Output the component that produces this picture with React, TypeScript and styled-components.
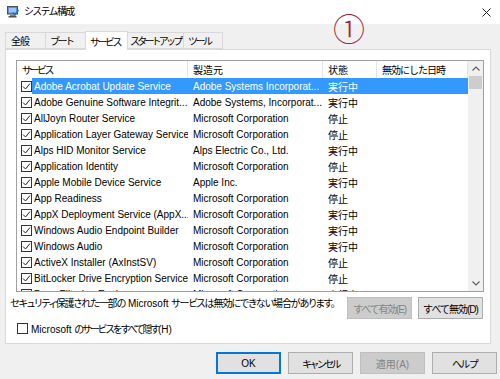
import styled, { createGlobalStyle } from "styled-components";

const GlobalStyle = createGlobalStyle`
  html, body {
    margin: 0;
    padding: 0;
    background: #f0f0f0;
  }
  body {
    font-family: "Liberation Sans", "Noto Sans CJK JP", sans-serif;
    font-size: 10px;
    color: #000;
  }
  * {
    box-sizing: border-box;
  }
`;

const Window = styled.div`
  width: 500px;
  height: 379px;
  position: relative;
  overflow: hidden;
  background: #f0f0f0;
  display: flex;
  flex-direction: column;
`;

const TitleBar = styled.div`
  height: 24px;
  background: #fff;
  display: flex;
  align-items: center;
  padding: 0 9px 0 7px;
  gap: 5px;
`;

const TitleText = styled.span`
  flex: 1;
  font-size: 10px;
  line-height: 12px;
  letter-spacing: -1.7px;
`;

const Body = styled.div`
  padding: 0 0 0 5px;
  display: flex;
  flex-direction: column;
`;

const TabStrip = styled.div`
  margin-top: 8px;
  height: 17px;
  display: flex;
  align-items: flex-end;
`;

const Tab = styled.div<{ $w: number; $ls: number; $pad: number; $active?: boolean }>`
  width: ${(p) => p.$w}px;
  height: ${(p) => (p.$active ? 19 : 17)}px;
  margin-right: -1px;
  margin-bottom: ${(p) => (p.$active ? -1 : 0)}px;
  padding: 0 0 0 ${(p) => p.$pad}px;
  display: flex;
  align-items: center;
  border: 1px solid #d9d9d9;
  border-bottom: ${(p) => (p.$active ? "none" : "1px solid #d9d9d9")};
  background: ${(p) => (p.$active ? "#fff" : "#f0f0f0")};
  position: relative;
  z-index: ${(p) => (p.$active ? 1 : 0)};
  white-space: nowrap;
  letter-spacing: ${(p) => p.$ls}px;
`;

const Panel = styled.div`
  width: 486px;
  height: 295px;
  background: #fff;
  border: 1px solid #d9d9d9;
  padding: 10px 7px 0 4px;
  display: flex;
  flex-direction: column;
`;

const ListBox = styled.div`
  margin-left: 6px;
  width: 468px;
  height: 232px;
  border: 1px solid #a0a0a0;
  display: flex;
  overflow: hidden;
`;

const ListArea = styled.div`
  width: 451px;
  overflow: hidden;
`;

const HeaderRow = styled.div`
  height: 17px;
  display: grid;
  grid-template-columns: 171px 135px 54px 91px;
`;

const HeaderCell = styled.div<{ $ls?: number }>`
  border-right: 1px solid #e5e5e5;
  padding-left: 5px;
  display: flex;
  align-items: center;
  white-space: nowrap;
  overflow: hidden;
  letter-spacing: ${(p) => p.$ls ?? 0}px;
`;

const Row = styled.div`
  height: 16px;
  display: grid;
  grid-template-columns: 15px 156px 135px 54px 91px;
`;

const CheckCell = styled.div`
  display: flex;
  align-items: center;
  padding-left: 4px;
`;

const Cell = styled.div<{ $selected?: boolean; $pad?: number }>`
  padding-left: ${(p) => p.$pad ?? 5}px;
  display: flex;
  align-items: center;
  white-space: nowrap;
  overflow: hidden;
  background: ${(p) => (p.$selected ? "#3399ff" : "transparent")};
  color: ${(p) => (p.$selected ? "#fff" : "#000")};
`;

const Box = styled.span`
  width: 11px;
  height: 11px;
  border: 1px solid #333;
  background: #fff;
  display: inline-flex;
  align-items: center;
  justify-content: center;
  flex-shrink: 0;
`;

const ScrollBar = styled.div`
  width: 15px;
  background: #f0f0f0;
  display: flex;
  flex-direction: column;
`;

const ScrollButton = styled.div`
  height: 15px;
  display: flex;
  align-items: center;
  justify-content: center;
`;

const Thumb = styled.div`
  height: 13px;
  margin: 0 1px;
  background: #cdcdcd;
`;

const Track = styled.div`
  flex: 1;
`;

const NoteRow = styled.div`
  margin-top: 5px;
  display: flex;
  align-items: flex-start;
  gap: 6px;
`;

const NoteText = styled.div`
  flex: 1;
  padding-top: 1px;
  line-height: 12px;
  white-space: nowrap;
  font-feature-settings: "palt" 1;
`;

const Jp = styled.span<{ $ls: number }>`
  letter-spacing: ${(p) => p.$ls}px;
`;

const Button = styled.div<{ $disabled?: boolean; $default?: boolean; $ls?: number }>`
  width: 65px;
  height: 22px;
  flex-shrink: 0;
  display: flex;
  align-items: center;
  justify-content: center;
  white-space: nowrap;
  letter-spacing: ${(p) => p.$ls ?? 0}px;
  background: ${(p) => (p.$disabled ? "#cccccc" : "#e1e1e1")};
  border: 1px solid
    ${(p) => (p.$default ? "#0078d7" : p.$disabled ? "#bfbfbf" : "#adadad")};
  box-shadow: ${(p) => (p.$default ? "inset 0 0 0 1px #0078d7" : "none")};
  color: ${(p) => (p.$disabled ? "#838383" : "#000")};
`;

const HideRow = styled.label`
  margin: 1px 0 0 7px;
  height: 16px;
  display: flex;
  align-items: center;
  gap: 3px;
  white-space: pre;
`;

const Footer = styled.div`
  margin-top: 8px;
  padding-right: 3px;
  display: flex;
  justify-content: flex-end;
  gap: 7px;
`;

const Annotation = styled.div`
  position: absolute;
  left: 333px;
  top: 9px;
  font-family: "Noto Sans CJK JP", sans-serif;
  font-weight: 300;
  font-size: 32px;
  line-height: 36px;
  color: #a3203c;
`;

const AppIcon = () => (
  <svg width="12" height="12" viewBox="0 0 12 12">
    <rect x="0.5" y="0.5" width="10" height="7.5" fill="#5b8fd6" stroke="#4a4f58" />
    <rect x="2" y="2" width="7" height="4.5" fill="#9cc6f2" />
    <rect x="3" y="8.5" width="5" height="1.5" fill="#7a7f88" />
    <rect x="1.5" y="10" width="8" height="1.5" fill="#4a4f58" />
    <path d="M6 6.5 L8 9 L11.5 4" stroke="#2d6fbf" strokeWidth="1.4" fill="none" />
  </svg>
);

const CloseIcon = () => (
  <svg width="9" height="9" viewBox="0 0 9 9">
    <path d="M0.5 0.5 L8.5 8.5 M8.5 0.5 L0.5 8.5" stroke="#222" strokeWidth="1" />
  </svg>
);

const Chevron = ({ up }: { up?: boolean }) => (
  <svg width="8" height="5" viewBox="0 0 8 5">
    <path
      d={up ? "M0.5 4.5 L4 1 L7.5 4.5" : "M0.5 0.5 L4 4 L7.5 0.5"}
      stroke="#606060"
      strokeWidth="1.2"
      fill="none"
    />
  </svg>
);

const CheckBox = ({ checked }: { checked?: boolean }) => (
  <Box>
    {checked && (
      <svg width="9" height="9" viewBox="0 0 9 9">
        <path d="M1 4.5 L3.5 7 L8 1.5" stroke="#222" strokeWidth="1" fill="none" />
      </svg>
    )}
  </Box>
);

const services: [string, string, string][] = [
  ["Adobe Acrobat Update Service", "Adobe Systems Incorporat...", "実行中"],
  ["Adobe Genuine Software Integrit...", "Adobe Systems, Incorporat...", "実行中"],
  ["AllJoyn Router Service", "Microsoft Corporation", "停止"],
  ["Application Layer Gateway Service", "Microsoft Corporation", "停止"],
  ["Alps HID Monitor Service", "Alps Electric Co., Ltd.", "実行中"],
  ["Application Identity", "Microsoft Corporation", "停止"],
  ["Apple Mobile Device Service", "Apple Inc.", "実行中"],
  ["App Readiness", "Microsoft Corporation", "停止"],
  ["AppX Deployment Service (AppX...", "Microsoft Corporation", "実行中"],
  ["Windows Audio Endpoint Builder", "Microsoft Corporation", "実行中"],
  ["Windows Audio", "Microsoft Corporation", "実行中"],
  ["ActiveX Installer (AxInstSV)", "Microsoft Corporation", "停止"],
  ["BitLocker Drive Encryption Service", "Microsoft Corporation", "停止"],
  ["Base Filtering Engine", "Microsoft Corporation", "実行中"],
];

const tabs = [
  { label: "全般", w: 41, ls: -1, pad: 5 },
  { label: "ブート", w: 41, ls: -2.5, pad: 4 },
  { label: "サービス", w: 43, ls: -2.5, pad: 4, active: true },
  { label: "スタートアップ", w: 57, ls: -2.8, pad: 2 },
  { label: "ツール", w: 40, ls: -2.5, pad: 4 },
];

export default function App() {
  return (
    <>
      <GlobalStyle />
      <Window>
        <TitleBar>
          <AppIcon />
          <TitleText>システム構成</TitleText>
          <CloseIcon />
        </TitleBar>
        <Body>
          <TabStrip>
            {tabs.map((t) => (
              <Tab key={t.label} $w={t.w} $ls={t.ls} $pad={t.pad} $active={t.active}>
                {t.label}
              </Tab>
            ))}
          </TabStrip>
          <Panel>
            <ListBox>
              <ListArea>
                <HeaderRow>
                  <HeaderCell $ls={-2.5}>サービス</HeaderCell>
                  <HeaderCell>製造元</HeaderCell>
                  <HeaderCell>状態</HeaderCell>
                  <HeaderCell $ls={-1}>無効にした日時</HeaderCell>
                </HeaderRow>
                {services.map(([name, maker, state], i) => (
                  <Row key={name}>
                    <CheckCell>
                      <CheckBox checked />
                    </CheckCell>
                    <Cell $selected={i === 0} $pad={2}>
                      {name}
                    </Cell>
                    <Cell $selected={i === 0}>{maker}</Cell>
                    <Cell $selected={i === 0}>{state}</Cell>
                    <Cell $selected={i === 0} />
                  </Row>
                ))}
              </ListArea>
              <ScrollBar>
                <ScrollButton>
                  <Chevron up />
                </ScrollButton>
                <Thumb />
                <Track />
                <ScrollButton>
                  <Chevron />
                </ScrollButton>
              </ScrollBar>
            </ListBox>
            <NoteRow>
              <NoteText>
                <Jp $ls={-1.05}>セキュリティ保護された一部の</Jp> Microsoft{" "}
                <Jp $ls={-1.05}>サービスは無効にできない場合があります。</Jp>
              </NoteText>
              <Button $disabled $ls={-1.2}>
                すべて有効(E)
              </Button>
              <Button $ls={-1}>すべて無効(D)</Button>
            </NoteRow>
            <HideRow>
              <CheckBox />
              <span>
                Microsoft <Jp $ls={-2.3}>のサービスをすべて隠す</Jp>(H)
              </span>
            </HideRow>
          </Panel>
          <Footer>
            <Button $default>OK</Button>
            <Button $ls={-2.6}>キャンセル</Button>
            <Button $disabled>適用(A)</Button>
            <Button $ls={-1.7}>ヘルプ</Button>
          </Footer>
        </Body>
        <Annotation>①</Annotation>
      </Window>
    </>
  );
}
